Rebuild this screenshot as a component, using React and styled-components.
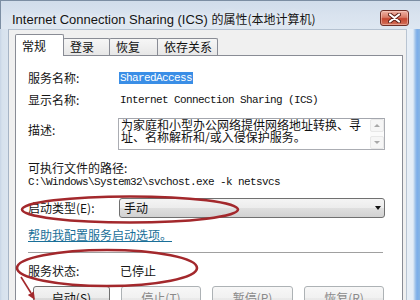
import React from 'react';
import styled, { createGlobalStyle } from 'styled-components';

const CJK = `"Noto Sans CJK SC", "Noto Sans", sans-serif`;
const MONO = `"Liberation Mono", "Noto Sans CJK SC", monospace`;

const GlobalStyle = createGlobalStyle`
  html, body { margin: 0; padding: 0; }
  body {
    width: 420px; height: 300px; overflow: hidden; background: #fff;
    font-family: ${CJK};
    font-size: 12px;
    line-height: 16px;
  }
  #root { width: 420px; height: 300px; }
`;

const Window = styled.div`
  position: relative;
  width: 420px;
  height: 300px;
  overflow: hidden;
  display: flex;
  flex-direction: column;
  background: linear-gradient(90deg, #c6d4e5 0px, #d6e1ed 2px, #dae4ef 8px, #dae4ef 406px,
    #e8eff7 407px, #e4edf7 413px, #a7c7ea 415px, #7badea 417px, #86b4e4 420px);
`;

const TitleBar = styled.div`
  height: 29px;
  box-sizing: border-box;
  padding: 9px 11px 0 12px;
  display: flex;
  align-items: center;
  justify-content: space-between;
  background: linear-gradient(180deg, #d0dcea 0%, #d9e3ef 55%, #dee7f1 100%);
  box-shadow: inset 1px 1px 0 #7c8ea3;
`;

const Title = styled.div`
  font-family: "Liberation Sans", ${CJK};
  font-size: 13px;
  line-height: 16px;
  padding-top: 1px;
  color: #141414;
  white-space: nowrap;
  text-shadow: 0 0 6px rgba(255, 255, 255, 0.95);
`;

const TitleCjk = styled.span`
  font-family: ${CJK};
  font-size: 12px;
`;

const CloseButton = styled.div`
  width: 29px;
  height: 16px;
  box-sizing: border-box;
  margin-bottom: 2px;
  border: 1px solid #6e2f27;
  border-radius: 3px;
  display: flex;
  align-items: center;
  justify-content: center;
  background: linear-gradient(180deg, #eeb2a4 0%, #d97b67 45%, #c4452f 55%, #d2715a 100%);
  box-shadow: inset 0 0 0 1px rgba(255, 220, 210, 0.45);
`;

const Body = styled.div`
  flex: 1;
  min-height: 0;
  display: flex;
  padding-left: 8px;
  padding-right: 13px;
`;

const Client = styled.div`
  flex: 1;
  display: flex;
  flex-direction: column;
  background: #f0f0f0;
  border-left: 1px solid #a6b4c5;
  border-right: 1px solid #b8c4d2;
  border-top: 1px solid #b4c1d0;
  padding: 4px 3px 0 6px;
`;

const TabStrip = styled.div`
  height: 22px;
  display: flex;
  align-items: flex-end;
`;

const Tab = styled.div`
  box-sizing: border-box;
  width: ${(p) => p.$w}px;
  height: ${(p) => (p.$active ? 22 : 17)}px;
  margin-left: ${(p) => (p.$first ? 0 : -1)}px;
  margin-bottom: ${(p) => (p.$active ? -1 : 0)}px;
  padding-left: 6px;
  display: flex;
  align-items: center;
  border: 1px solid #898c95;
  border-bottom: none;
  border-radius: 2px 2px 0 0;
  background: ${(p) => (p.$active ? '#ffffff' : 'linear-gradient(180deg, #f6f6f6, #e7e7e7)')};
  position: relative;
  z-index: ${(p) => (p.$active ? 2 : 1)};
  font-size: 12px;
  line-height: 14px;
  color: #111;
  white-space: nowrap;
`;

const Panel = styled.div`
  flex: 1;
  background: #fff;
  border: 1px solid #898c95;
  border-bottom: none;
  padding: 14px 17px 0 12px;
  display: flex;
  flex-direction: column;
`;

const FieldRow = styled.div`
  display: grid;
  grid-template-columns: 92px 1fr;
  align-items: ${(p) => (p.$top ? 'start' : 'center')};
  margin-top: ${(p) => p.$mt || 0}px;
  height: ${(p) => p.$h || 16}px;
  line-height: 16px;
`;

const Label = styled.div`
  font-size: 12px;
  line-height: ${(p) => p.$lh || 16}px;
  padding-top: ${(p) => p.$pt || 0}px;
  color: #151515;
  white-space: nowrap;
`;

const LineText = styled.div`
  font-size: 12px;
  line-height: 14px;
  margin-top: ${(p) => p.$mt || 0}px;
  color: #151515;
  white-space: nowrap;
`;

const Mono = styled.div`
  font-family: ${MONO};
  font-size: 11px;
  letter-spacing: -0.6px;
  line-height: 16px;
  color: #111;
  white-space: nowrap;
`;

const MonoLine = styled.div`
  font-family: ${MONO};
  font-size: 11px;
  letter-spacing: -0.6px;
  line-height: 14px;
  color: #111;
  white-space: nowrap;
`;

const ValueCell = styled.div`
  line-height: 12px;
  height: 12px;
  display: flex;
`;

const Selected = styled.span`
  font-family: ${MONO};
  font-size: 11px;
  letter-spacing: -0.6px;
  line-height: 12px;
  display: inline-block;
  margin-left: -1px;
  padding: 0 1px 0 1px;
  background: #3a8ee6;
  color: #fff;
`;

const TextBox = styled.div`
  height: 32px;
  box-sizing: border-box;
  margin-left: -2px;
  border: 1px solid #abadb3;
  border-top-color: #a3a6ad;
  background: #fff;
  display: flex;
`;

const TextBoxText = styled.div`
  flex: 1;
  padding-left: 2px;
  font-size: 12px;
  line-height: 12px;
  color: #111;
  white-space: nowrap;
  overflow: hidden;
`;

const ScrollBar = styled.div`
  width: 14px;
  display: flex;
  flex-direction: column;
  justify-content: space-between;
  background: #fbfbfb;
`;

const ScrollBtn = styled.div`
  height: 13px;
  box-sizing: border-box;
  border: 1px solid #e8e8e8;
  border-radius: 2px;
  background: #f6f6f6;
  display: flex;
  align-items: center;
  justify-content: center;
  &::after {
    content: '';
    border-left: 3px solid transparent;
    border-right: 3px solid transparent;
    ${(p) => (p.$up ? 'border-bottom: 3px solid #a8a8a8;' : 'border-top: 3px solid #a8a8a8;')}
  }
`;

const Select = styled.div`
  height: 20px;
  box-sizing: border-box;
  margin-left: -1px;
  border: 1px solid #707070;
  border-radius: 3px;
  background: linear-gradient(180deg, #f4f4f4 0%, #ececec 50%, #dfdfdf 50%, #d2d2d2 100%);
  display: flex;
  align-items: center;
  justify-content: space-between;
  padding: 0 3px 0 4px;
  font-size: 12px;
  line-height: 16px;
  color: #111;
  &::after {
    content: '';
    border-left: 3.5px solid transparent;
    border-right: 3.5px solid transparent;
    border-top: 4px solid #111;
  }
`;

const Link = styled.div`
  font-size: 12px;
  line-height: 14px;
  margin-top: 10px;
  color: #1a6f98;
  text-decoration: underline;
  white-space: nowrap;
`;

const Separator = styled.div`
  height: 1px;
  margin-top: 10px;
  margin-right: 2px;
  background: #a0a0a0;
`;

const ButtonRow = styled.div`
  margin-top: 8px;
  padding-left: 5px;
  margin-right: 1px;
  display: flex;
  justify-content: space-between;
`;

const Button = styled.div`
  width: ${(p) => p.$w}px;
  height: 23px;
  box-sizing: border-box;
  border: 1px solid ${(p) => (p.$disabled ? '#adb2b5' : '#707070')};
  border-radius: 3px;
  background: ${(p) =>
    p.$disabled
      ? 'linear-gradient(180deg, #f7f7f7 0%, #f1f1f1 50%, #eaeaea 50%, #e4e4e4 100%)'
      : 'linear-gradient(180deg, #f4f4f4 0%, #ececec 50%, #dddddd 50%, #cfcfcf 100%)'};
  display: flex;
  align-items: center;
  justify-content: center;
  font-size: 12px;
  line-height: 14px;
  color: ${(p) => (p.$disabled ? '#8a8a8a' : '#111')};
  white-space: nowrap;
`;

const Overlay = styled.svg`
  position: absolute;
  left: 0;
  top: 0;
  pointer-events: none;
`;

export default function App() {
  return (
    <>
      <GlobalStyle />
      <Window>
        <TitleBar>
          <Title>
            Internet Connection Sharing (ICS) <TitleCjk>的属性(本地计算机)</TitleCjk>
          </Title>
          <CloseButton>
            <svg width="13" height="10" viewBox="0 0 13 10">
              <path d="M2 1.5 L11 8.5 M11 1.5 L2 8.5" stroke="#5a1d16" strokeWidth="4" strokeLinecap="round" />
              <path d="M2 1.5 L11 8.5 M11 1.5 L2 8.5" stroke="#ffffff" strokeWidth="2.2" strokeLinecap="round" />
            </svg>
          </CloseButton>
        </TitleBar>
        <Body>
          <Client>
            <TabStrip>
              <Tab $first $active $w={49}>常规</Tab>
              <Tab $w={47}>登录</Tab>
              <Tab $w={49}>恢复</Tab>
              <Tab $w={61}>依存关系</Tab>
            </TabStrip>
            <Panel>
              <FieldRow>
                <Label>服务名称:</Label>
                <ValueCell><Selected>SharedAccess</Selected></ValueCell>
              </FieldRow>
              <FieldRow $mt={6}>
                <Label>显示名称:</Label>
                <Mono>Internet Connection Sharing (ICS)</Mono>
              </FieldRow>
              <FieldRow $mt={10} $top $h={32}>
                <Label $pt={6} $lh={12}>描述:</Label>
                <TextBox>
                  <TextBoxText>
                    为家庭和小型办公网络提供网络地址转换、寻
                    <br />
                    址、名称解析和/或入侵保护服务。
                  </TextBoxText>
                  <ScrollBar>
                    <ScrollBtn $up />
                    <ScrollBtn />
                  </ScrollBar>
                </TextBox>
              </FieldRow>
              <LineText $mt={11}>可执行文件的路径:</LineText>
              <MonoLine>{'C:\\Windows\\System32\\svchost.exe -k netsvcs'}</MonoLine>
              <FieldRow $mt={9} $h={20}>
                <Label>启动类型(E):</Label>
                <Select>手动</Select>
              </FieldRow>
              <Link>帮助我配置服务启动选项。</Link>
              <Separator />
              <FieldRow $mt={11} $h={14}>
                <Label $lh={14}>服务状态:</Label>
                <Label $lh={14}>已停止</Label>
              </FieldRow>
              <ButtonRow>
                <Button $w={77}>启动(S)</Button>
                <Button $w={80} $disabled>停止(T)</Button>
                <Button $w={81} $disabled>暂停(P)</Button>
                <Button $w={80} $disabled>恢复(R)</Button>
              </ButtonRow>
            </Panel>
          </Client>
        </Body>
        <Overlay width="420" height="300" viewBox="0 0 420 300">
          <ellipse cx="130" cy="209.5" rx="108" ry="13" fill="none" stroke="#a3282c" strokeWidth="2.6" />
          <ellipse cx="107" cy="268" rx="90" ry="18" fill="none" stroke="#a3282c" strokeWidth="2.6" />
          <line x1="21" y1="277" x2="31" y2="293" stroke="#a3282c" strokeWidth="1.6" />
          <polygon points="35,300 27.8,295 33.8,291.4" fill="#a3282c" />
        </Overlay>
      </Window>
    </>
  );
}
